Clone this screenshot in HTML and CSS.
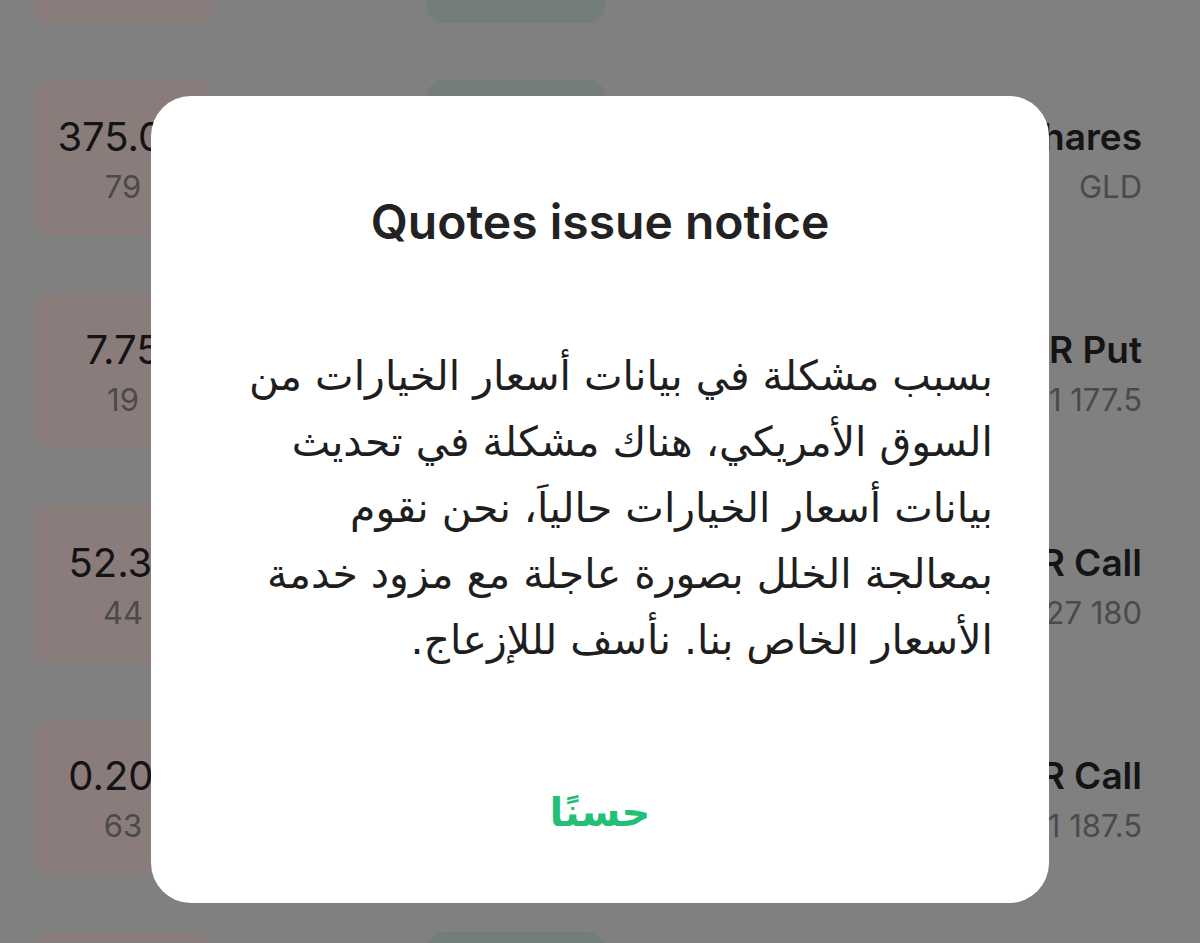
FILE: index.html
```html
<!DOCTYPE html>
<html lang="en">
<head>
<meta charset="utf-8">
<title>Quotes issue notice</title>
<link rel="stylesheet" href="styles.css">
</head>
<body>
<div class="list">
  <div class="row">
    <div class="quote down"><div class="price">1.25</div><div class="vol">12</div></div>
    <div class="quote up"><div class="price">1.30</div><div class="vol">8</div></div>
    <div class="info"><div class="name">SPDR Put</div><div class="sub">Jun 21 170</div></div>
  </div>
  <div class="row">
    <div class="quote down"><div class="price">375.00</div><div class="vol">79</div></div>
    <div class="quote up"><div class="price">376.10</div><div class="vol">52</div></div>
    <div class="info"><div class="name">SPDR Gold Shares</div><div class="sub">GLD</div></div>
  </div>
  <div class="row">
    <div class="quote down"><div class="price">7.75</div><div class="vol">19</div></div>
    <div class="quote up"><div class="price">7.95</div><div class="vol">21</div></div>
    <div class="info"><div class="name">GLD SPDR Put</div><div class="sub">Jun 21 177.5</div></div>
  </div>
  <div class="row">
    <div class="quote down"><div class="price">52.30</div><div class="vol">44</div></div>
    <div class="quote up"><div class="price">53.10</div><div class="vol">40</div></div>
    <div class="info"><div class="name">GLD SPDR Call</div><div class="sub">Dec 27 180</div></div>
  </div>
  <div class="row">
    <div class="quote down"><div class="price">0.205</div><div class="vol">63</div></div>
    <div class="quote up"><div class="price">0.25</div><div class="vol">70</div></div>
    <div class="info"><div class="name">GLD SPDR Call</div><div class="sub">Jun 21 187.5</div></div>
  </div>
  <div class="row">
    <div class="quote down"><div class="price">3.10</div><div class="vol">15</div></div>
    <div class="quote up"><div class="price">3.30</div><div class="vol">18</div></div>
    <div class="info"><div class="name">GLD SPDR Put</div><div class="sub">Jun 21 190</div></div>
  </div>
</div>

<div class="dialog" role="dialog">
  <h1 class="dialog-title">Quotes issue notice</h1>
  <p class="dialog-body" dir="rtl" lang="ar">بسبب مشكلة في بيانات أسعار الخيارات من<br>السوق الأمريكي، هناك مشكلة في تحديث<br>بيانات أسعار الخيارات حالياَ، نحن نقوم<br>بمعالجة الخلل بصورة عاجلة مع مزود خدمة<br>الأسعار الخاص بنا. نأسف لللإزعاج.</p>
  <button class="dialog-button" lang="ar" dir="rtl">حسنًا</button>
</div>
</body>
</html>
```
FILE: styles.css
```css
html, body {
  margin: 0;
  padding: 0;
}
body {
  width: 1200px;
  height: 943px;
  overflow: hidden;
  background: #808080;
  font-family: Inter, "Open Sans", "DejaVu Sans", sans-serif;
  position: relative;
}
.list {
  height: 1076px;
  margin-top: -133px;
  padding: 0 58px 0 34px;
  display: flex;
  flex-direction: column;
  gap: 57px;
  overflow: hidden;
}
.row {
  display: flex;
  align-items: center;
  height: 156px;
  flex: none;
}
.quote {
  width: 178px;
  height: 156px;
  border-radius: 16px;
  box-sizing: border-box;
  padding-top: 8px;
  display: flex;
  flex-direction: column;
  justify-content: center;
  align-items: center;
  flex: none;
  white-space: nowrap;
}
.quote.down {
  background: #8a7c7b;
  margin-right: 215px;
}
.quote.up {
  background: #737e78;
}
.price {
  font-size: 40px;
  line-height: 50px;
  color: #141414;
}
.vol {
  font-size: 31px;
  line-height: 50px;
  color: #4a4a4a;
}
.info {
  flex: 1;
  text-align: right;
  padding-top: 8px;
  white-space: nowrap;
}
.name {
  font-size: 37px;
  line-height: 50px;
  font-weight: 600;
  color: #141414;
}
.sub {
  font-size: 31px;
  line-height: 50px;
  color: #4a4a4a;
}
.dialog {
  position: absolute;
  left: 151px;
  top: 96px;
  width: 898px;
  height: 807px;
  box-sizing: border-box;
  background: #ffffff;
  border-radius: 40px;
  padding: 101px 56px 66px;
  display: flex;
  flex-direction: column;
  align-items: center;
}
.dialog-title {
  margin: 0;
  font-size: 48px;
  line-height: 50px;
  font-weight: 600;
  color: #222222;
  text-align: center;
}
.dialog-body {
  margin: 96px 0 0;
  align-self: stretch;
  font-family: "DejaVu Sans", sans-serif;
  font-size: 41px;
  line-height: 66px;
  color: #1e1e1e;
  text-align: right;
  white-space: nowrap;
}
.dialog-button {
  margin-top: auto;
  margin-bottom: 0;
  border: none;
  background: none;
  padding: 0;
  font-family: "DejaVu Sans", sans-serif;
  font-size: 40px;
  line-height: 50px;
  font-weight: bold;
  color: #22bf77;
}
```
